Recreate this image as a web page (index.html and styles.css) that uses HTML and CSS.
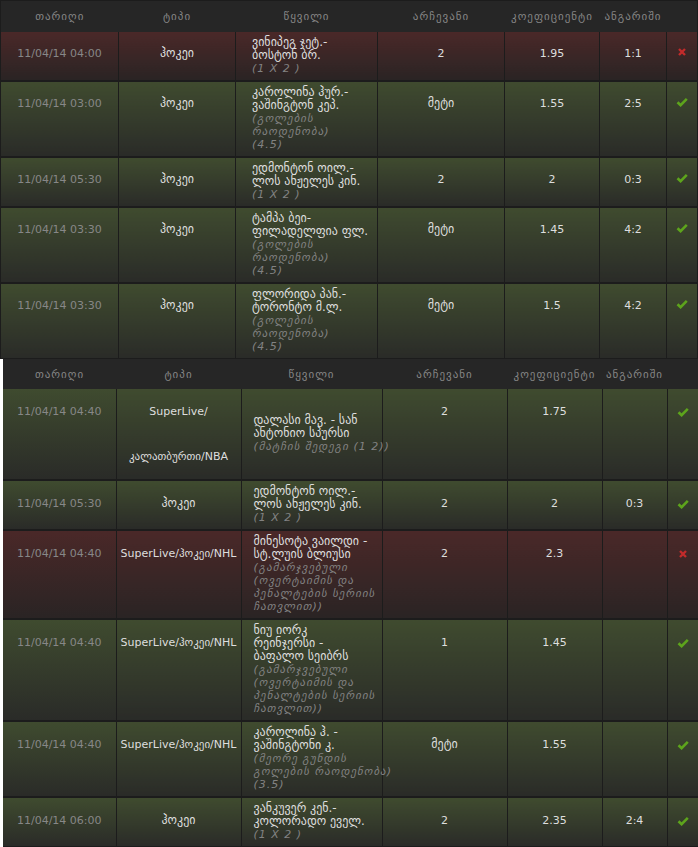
FILE: index.html
```html
<!DOCTYPE html>
<html>
<head>
<meta charset="utf-8">
<link rel="stylesheet" href="styles.css">
</head>
<body>
<table class="bets bets-main">
  <colgroup>
    <col class="c-date"><col class="c-type"><col class="c-pair"><col class="c-pick"><col class="c-odds"><col class="c-score"><col class="c-res">
  </colgroup>
  <thead>
    <tr><th>თარიღი</th><th>ტიპი</th><th>წყვილი</th><th>არჩევანი</th><th>კოეფიციენტი</th><th>ანგარიში</th><th></th></tr>
  </thead>
  <tbody>
    <tr class="lost">
      <td class="date">11/04/14 04:00</td><td class="geo">ჰოკეი</td>
      <td class="pair">ვინიპეგ ჯეტ.-<br>ბოსტონ ბრ.<br><i>(1 X 2 )</i></td>
      <td>2</td><td>1.95</td><td>1:1</td>
      <td class="res"><svg class="x" viewBox="0 0 10 10"><path d="M2 2L8 8M8 2L2 8"/></svg></td>
    </tr>
    <tr class="won">
      <td class="date">11/04/14 03:00</td><td class="geo">ჰოკეი</td>
      <td class="pair">კაროლინა ჰურ.-<br>ვაშინგტონ კეპ.<br><i>(გოლების<br>რაოდენობა)<br>(4.5)</i></td>
      <td class="geo">მეტი</td><td>1.55</td><td>2:5</td>
      <td class="res"><svg class="ok" viewBox="0 0 12 10"><path d="M1.5 5.2L4.6 8.2L10.8 1.8"/></svg></td>
    </tr>
    <tr class="won">
      <td class="date">11/04/14 05:30</td><td class="geo">ჰოკეი</td>
      <td class="pair">ედმონტონ ოილ.-<br>ლოს ანჟელეს კინ.<br><i>(1 X 2 )</i></td>
      <td>2</td><td>2</td><td>0:3</td>
      <td class="res"><svg class="ok" viewBox="0 0 12 10"><path d="M1.5 5.2L4.6 8.2L10.8 1.8"/></svg></td>
    </tr>
    <tr class="won">
      <td class="date">11/04/14 03:30</td><td class="geo">ჰოკეი</td>
      <td class="pair">ტამპა ბეი-<br>ფილადელფია ფლ.<br><i>(გოლების<br>რაოდენობა)<br>(4.5)</i></td>
      <td class="geo">მეტი</td><td>1.45</td><td>4:2</td>
      <td class="res"><svg class="ok" viewBox="0 0 12 10"><path d="M1.5 5.2L4.6 8.2L10.8 1.8"/></svg></td>
    </tr>
    <tr class="won">
      <td class="date">11/04/14 03:30</td><td class="geo">ჰოკეი</td>
      <td class="pair">ფლორიდა პან.-<br>ტორონტო მ.ლ.<br><i>(გოლების<br>რაოდენობა)<br>(4.5)</i></td>
      <td class="geo">მეტი</td><td>1.5</td><td>4:2</td>
      <td class="res"><svg class="ok" viewBox="0 0 12 10"><path d="M1.5 5.2L4.6 8.2L10.8 1.8"/></svg></td>
    </tr>
  </tbody>
</table>

<table class="bets bets-live">
  <colgroup>
    <col class="c-date"><col class="c-type"><col class="c-pair"><col class="c-pick"><col class="c-odds"><col class="c-score"><col class="c-res">
  </colgroup>
  <thead>
    <tr><th>თარიღი</th><th>ტიპი</th><th>წყვილი</th><th>არჩევანი</th><th>კოეფიციენტი</th><th>ანგარიში</th><th></th></tr>
  </thead>
  <tbody>
    <tr class="won">
      <td class="date">11/04/14 04:40</td><td>SuperLive/<wbr>კალათბურთი/NBA</td>
      <td class="pair">დალასი მავ. - სან<br>ანტონიო სპურსი<br><i>(მატჩის შედეგი (1 2))</i></td>
      <td>2</td><td>1.75</td><td></td>
      <td class="res"><svg class="ok" viewBox="0 0 12 10"><path d="M1.5 5.2L4.6 8.2L10.8 1.8"/></svg></td>
    </tr>
    <tr class="won">
      <td class="date">11/04/14 05:30</td><td class="geo">ჰოკეი</td>
      <td class="pair">ედმონტონ ოილ.-<br>ლოს ანჟელეს კინ.<br><i>(1 X 2 )</i></td>
      <td>2</td><td>2</td><td>0:3</td>
      <td class="res"><svg class="ok" viewBox="0 0 12 10"><path d="M1.5 5.2L4.6 8.2L10.8 1.8"/></svg></td>
    </tr>
    <tr class="lost">
      <td class="date">11/04/14 04:40</td><td>SuperLive/ჰოკეი/NHL</td>
      <td class="pair">მინესოტა ვაილდი -<br>სტ.ლუის ბლიუსი<br><i>(გამარჯვებული<br>(ოვერტაიმის და<br>პენალტების სერიის<br>ჩათვლით))</i></td>
      <td>2</td><td>2.3</td><td></td>
      <td class="res"><svg class="x" viewBox="0 0 10 10"><path d="M2 2L8 8M8 2L2 8"/></svg></td>
    </tr>
    <tr class="won">
      <td class="date">11/04/14 04:40</td><td>SuperLive/ჰოკეი/NHL</td>
      <td class="pair">ნიუ იორკ<br>რეინჯერსი -<br>ბაფალო სეიბრს<br><i>(გამარჯვებული<br>(ოვერტაიმის და<br>პენალტების სერიის<br>ჩათვლით))</i></td>
      <td>1</td><td>1.45</td><td></td>
      <td class="res"><svg class="ok" viewBox="0 0 12 10"><path d="M1.5 5.2L4.6 8.2L10.8 1.8"/></svg></td>
    </tr>
    <tr class="won">
      <td class="date">11/04/14 04:40</td><td>SuperLive/ჰოკეი/NHL</td>
      <td class="pair">კაროლინა ჰ. -<br>ვაშინგტონი კ.<br><i>(მეორე გუნდის<br>გოლების რაოდენობა)<br>(3.5)</i></td>
      <td class="geo">მეტი</td><td>1.55</td><td></td>
      <td class="res"><svg class="ok" viewBox="0 0 12 10"><path d="M1.5 5.2L4.6 8.2L10.8 1.8"/></svg></td>
    </tr>
    <tr class="won">
      <td class="date">11/04/14 06:00</td><td class="geo">ჰოკეი</td>
      <td class="pair">ვანკუვერ კენ.-<br>კოლორადო ეველ.<br><i>(1 X 2 )</i></td>
      <td>2</td><td>2.35</td><td>2:4</td>
      <td class="res"><svg class="ok" viewBox="0 0 12 10"><path d="M1.5 5.2L4.6 8.2L10.8 1.8"/></svg></td>
    </tr>
  </tbody>
</table>
</body>
</html>
```

FILE: styles.css
```css
body { margin: 0; background: #fff; font-family: "DejaVu Sans", sans-serif; font-size: 11px; }

.bets { border-collapse: collapse; table-layout: fixed; background: #1c1c1c; color: #dedede; }
.bets th { background: #262626; color: #858585; font-weight: normal; letter-spacing: 1px; text-align: center; padding: 0; }
.bets td { text-align: center; vertical-align: top; border-left: 1px solid #1c1c1c; border-bottom: 2px solid #1c1c1c; }
.bets td:first-child { border-left: none; }
.bets tbody tr:last-child td { border-bottom-width: 1px; }
.bets td.date { color: #878787; }
.bets td.geo { font-size: 12px; }
.bets td.pair { text-align: left; font-size: 12px; line-height: 13px; padding: 4px 0 5px; white-space: nowrap; }
.bets td.pair i { color: #828282; font-size: 11px; letter-spacing: 1px; }

tr.won td { background: linear-gradient(#3f4b2f, #2a2b28); }
tr.lost td { background: linear-gradient(#4a2828, #2a2424); }

.res svg { width: 12px; height: 10px; fill: none; }
.res svg.ok path { stroke: #5da41c; stroke-width: 2.6; }
.res svg.x { width: 10px; height: 10px; }
.res svg.x path { stroke: #c22b2b; stroke-width: 2.4; }

/* first table: values sit 15px from the row top */
.bets-main { width: 698px; border: 1px solid #1c1c1c; border-bottom: none; }
.bets-main th { height: 31px; }
.bets-main td { padding-top: 15px; line-height: 13px; }
.bets-main td.pair { padding-left: 16px; }
.bets-main .c-date { width: 118px; }
.bets-main .c-type { width: 117px; }
.bets-main .c-pair { width: 142px; }
.bets-main .c-pick { width: 127px; }
.bets-main .c-odds { width: 95px; }
.bets-main .c-score { width: 67px; }
.bets-main .c-res { width: 31px; }

/* second table: live bets, tall line boxes */
.bets-live { width: 695px; margin-left: 3px; }
.bets-live th { height: 30px; }
.bets-live td { padding: 0; line-height: 45px; }
.bets-live td.pair { vertical-align: middle; padding-left: 12px; }
.bets-live .c-date { width: 113px; }
.bets-live .c-type { width: 125px; }
.bets-live .c-pair { width: 141px; }
.bets-live .c-pick { width: 125px; }
.bets-live .c-odds { width: 95px; }
.bets-live .c-score { width: 65px; }
.bets-live .c-res { width: 31px; }
.bets-live .res svg { vertical-align: middle; }
```
